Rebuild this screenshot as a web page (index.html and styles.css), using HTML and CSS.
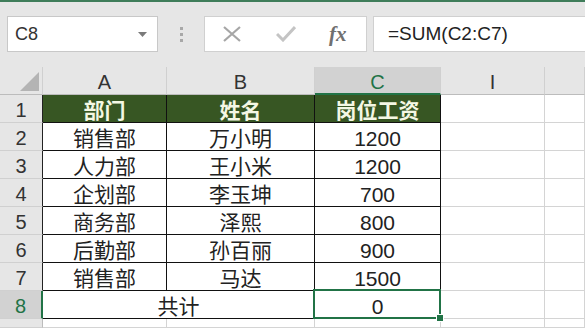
FILE: index.html
```html
<!DOCTYPE html>
<html lang="zh-CN">
  <head>
    <meta charset="UTF-8" />
    <title>工资表</title>
    <link rel="stylesheet" href="styles.css">
  </head>

  <body>
    <div class="top-line"></div>
    <div class="toolbar">
      <div class="name-box">
        <span>C8</span>
        <svg class="drop" width="9" height="5" viewBox="0 0 9 5"><path d="M0 0h9L4.5 5z" fill="#7a7a7a" /></svg>
      </div>
      <div class="grip"><i></i><i></i><i></i></div>
      <div class="fx-box">
        <svg width="18" height="16" viewBox="0 0 18 16"><path d="M1 1l16 14M17 1L1 15" stroke="#a6a6a6" stroke-width="2.2" fill="none" /></svg>
        <svg width="20" height="16" viewBox="0 0 20 16"><path d="M1 8l6 6L19 1" stroke="#c4c4c4" stroke-width="3" fill="none" /></svg>
        <span class="fx">fx</span>
      </div>
      <div class="formula">=SUM(C2:C7)</div>
    </div>

    <div class="sheet">
      <div class="corner"><span class="tri"></span></div>
      <div class="ch">A</div>
      <div class="ch">B</div>
      <div class="ch ch-on">C</div>
      <div class="ch">I</div>
      <div class="ch"></div>

      <div class="rh">1</div>
      <div class="c t th">部门</div>
      <div class="c t th">姓名</div>
      <div class="c t th">岗位工资</div>
      <div class="c"></div>
      <div class="c"></div>

      <div class="rh">2</div>
      <div class="c t">销售部</div>
      <div class="c t">万小明</div>
      <div class="c t">1200</div>
      <div class="c"></div>
      <div class="c"></div>

      <div class="rh">3</div>
      <div class="c t">人力部</div>
      <div class="c t">王小米</div>
      <div class="c t">1200</div>
      <div class="c"></div>
      <div class="c"></div>

      <div class="rh">4</div>
      <div class="c t">企划部</div>
      <div class="c t">李玉坤</div>
      <div class="c t">700</div>
      <div class="c"></div>
      <div class="c"></div>

      <div class="rh">5</div>
      <div class="c t">商务部</div>
      <div class="c t">泽熙</div>
      <div class="c t">800</div>
      <div class="c"></div>
      <div class="c"></div>

      <div class="rh">6</div>
      <div class="c t">后勤部</div>
      <div class="c t">孙百丽</div>
      <div class="c t">900</div>
      <div class="c"></div>
      <div class="c"></div>

      <div class="rh">7</div>
      <div class="c t">销售部</div>
      <div class="c t">马达</div>
      <div class="c t">1500</div>
      <div class="c"></div>
      <div class="c"></div>

      <div class="rh rh-on">8</div>
      <div class="c t merged">共计</div>
      <div class="c t active">0<span class="sel"><span class="handle"></span></span></div>
      <div class="c"></div>
      <div class="c"></div>

      <div class="rh rh-last"></div>
      <div class="c"></div>
      <div class="c"></div>
      <div class="c"></div>
      <div class="c"></div>
      <div class="c"></div>
    </div>
  </body>
</html>
```

FILE: styles.css
```css
* {
  margin: 0;
  padding: 0;
  box-sizing: border-box;
}

body {
  width: 585px;
  height: 328px;
  overflow: hidden;
  background: #fff;
  font-family: "Liberation Sans", "Noto Sans CJK SC", sans-serif;
  color: #222;
}

.top-line {
  height: 2px;
  background: #3f7d5a;
}

.toolbar {
  height: 65px;
  background: #e6e6e6;
  display: flex;
  align-items: flex-start;
  padding: 14px 0 0 7px;
}

.name-box {
  width: 151px;
  height: 36px;
  background: #fff;
  border: 1px solid #c8c8c8;
  display: flex;
  align-items: center;
  justify-content: space-between;
  padding: 0 10px 0 7px;
  font-size: 18px;
  color: #333;
}

.grip {
  width: 46px;
  height: 36px;
  display: flex;
  flex-direction: column;
  align-items: center;
  justify-content: center;
  gap: 3px;
}

.grip i {
  width: 3px;
  height: 3px;
  background: #a8a8a8;
}

.fx-box {
  width: 163px;
  height: 36px;
  background: #fff;
  border: 1px solid #d0d0d0;
  display: flex;
  align-items: center;
  padding-left: 18px;
  gap: 35px;
}

.fx {
  font-family: "Liberation Serif", "DejaVu Serif", serif;
  font-style: italic;
  font-weight: bold;
  font-size: 21px;
  color: #707070;
  margin-left: -2px;
}

.formula {
  flex: 1;
  height: 36px;
  margin-left: 6px;
  background: #fff;
  border: 1px solid #d0d0d0;
  border-right: none;
  display: flex;
  align-items: center;
  padding-left: 14px;
  font-size: 19px;
  color: #222;
}

.sheet {
  display: grid;
  grid-template-columns: 43px 124px 148px 126px 104px 1fr;
  grid-template-rows: 28px repeat(8, 28px) 9px;
  font-size: 21px;
}

.sheet > div {
  display: flex;
  align-items: center;
  justify-content: center;
  line-height: 1;
  padding-top: 3px;
}

.corner {
  background: #e6e6e6;
  border-right: 1px solid #d0d0d0;
  border-bottom: 1px solid #bcbcbc;
  position: relative;
}

.tri {
  position: absolute;
  right: 3px;
  bottom: 3px;
  width: 0;
  height: 0;
  border-left: 19px solid transparent;
  border-bottom: 19px solid #b4b4b4;
}

.ch {
  background: #e6e6e6;
  border-right: 1px solid #d0d0d0;
  border-bottom: 1px solid #bcbcbc;
  font-size: 20px;
  color: #333;
}

.ch-on {
  background: #d2d2d2;
  color: #217346;
  border-bottom: 2px solid #217346;
}

.rh {
  background: #e6e6e6;
  border-right: 1px solid #222;
  border-bottom: 1px solid #d0d0d0;
  font-size: 20px;
  color: #333;
}

.rh-on {
  background: #d2d2d2;
  color: #217346;
  border-right: 2px solid #217346;
}

.rh-last {
  border-right-color: #bcbcbc;
}

.c {
  border-right: 1px solid #d4d4d4;
  border-bottom: 1px solid #d4d4d4;
}

.t {
  border-right-color: #111;
  border-bottom-color: #111;
}

.th {
  background: #375623;
  color: #f4f7e4;
  font-weight: bold;
}

.merged {
  grid-column: span 2;
}

.active {
  position: relative;
}

.sel {
  position: absolute;
  top: -2px;
  left: -2px;
  right: -1px;
  bottom: -1px;
  border: 2px solid #217346;
}

.handle {
  position: absolute;
  right: -5px;
  bottom: -5px;
  width: 8px;
  height: 8px;
  background: #217346;
  border: 1px solid #fff;
}
```
